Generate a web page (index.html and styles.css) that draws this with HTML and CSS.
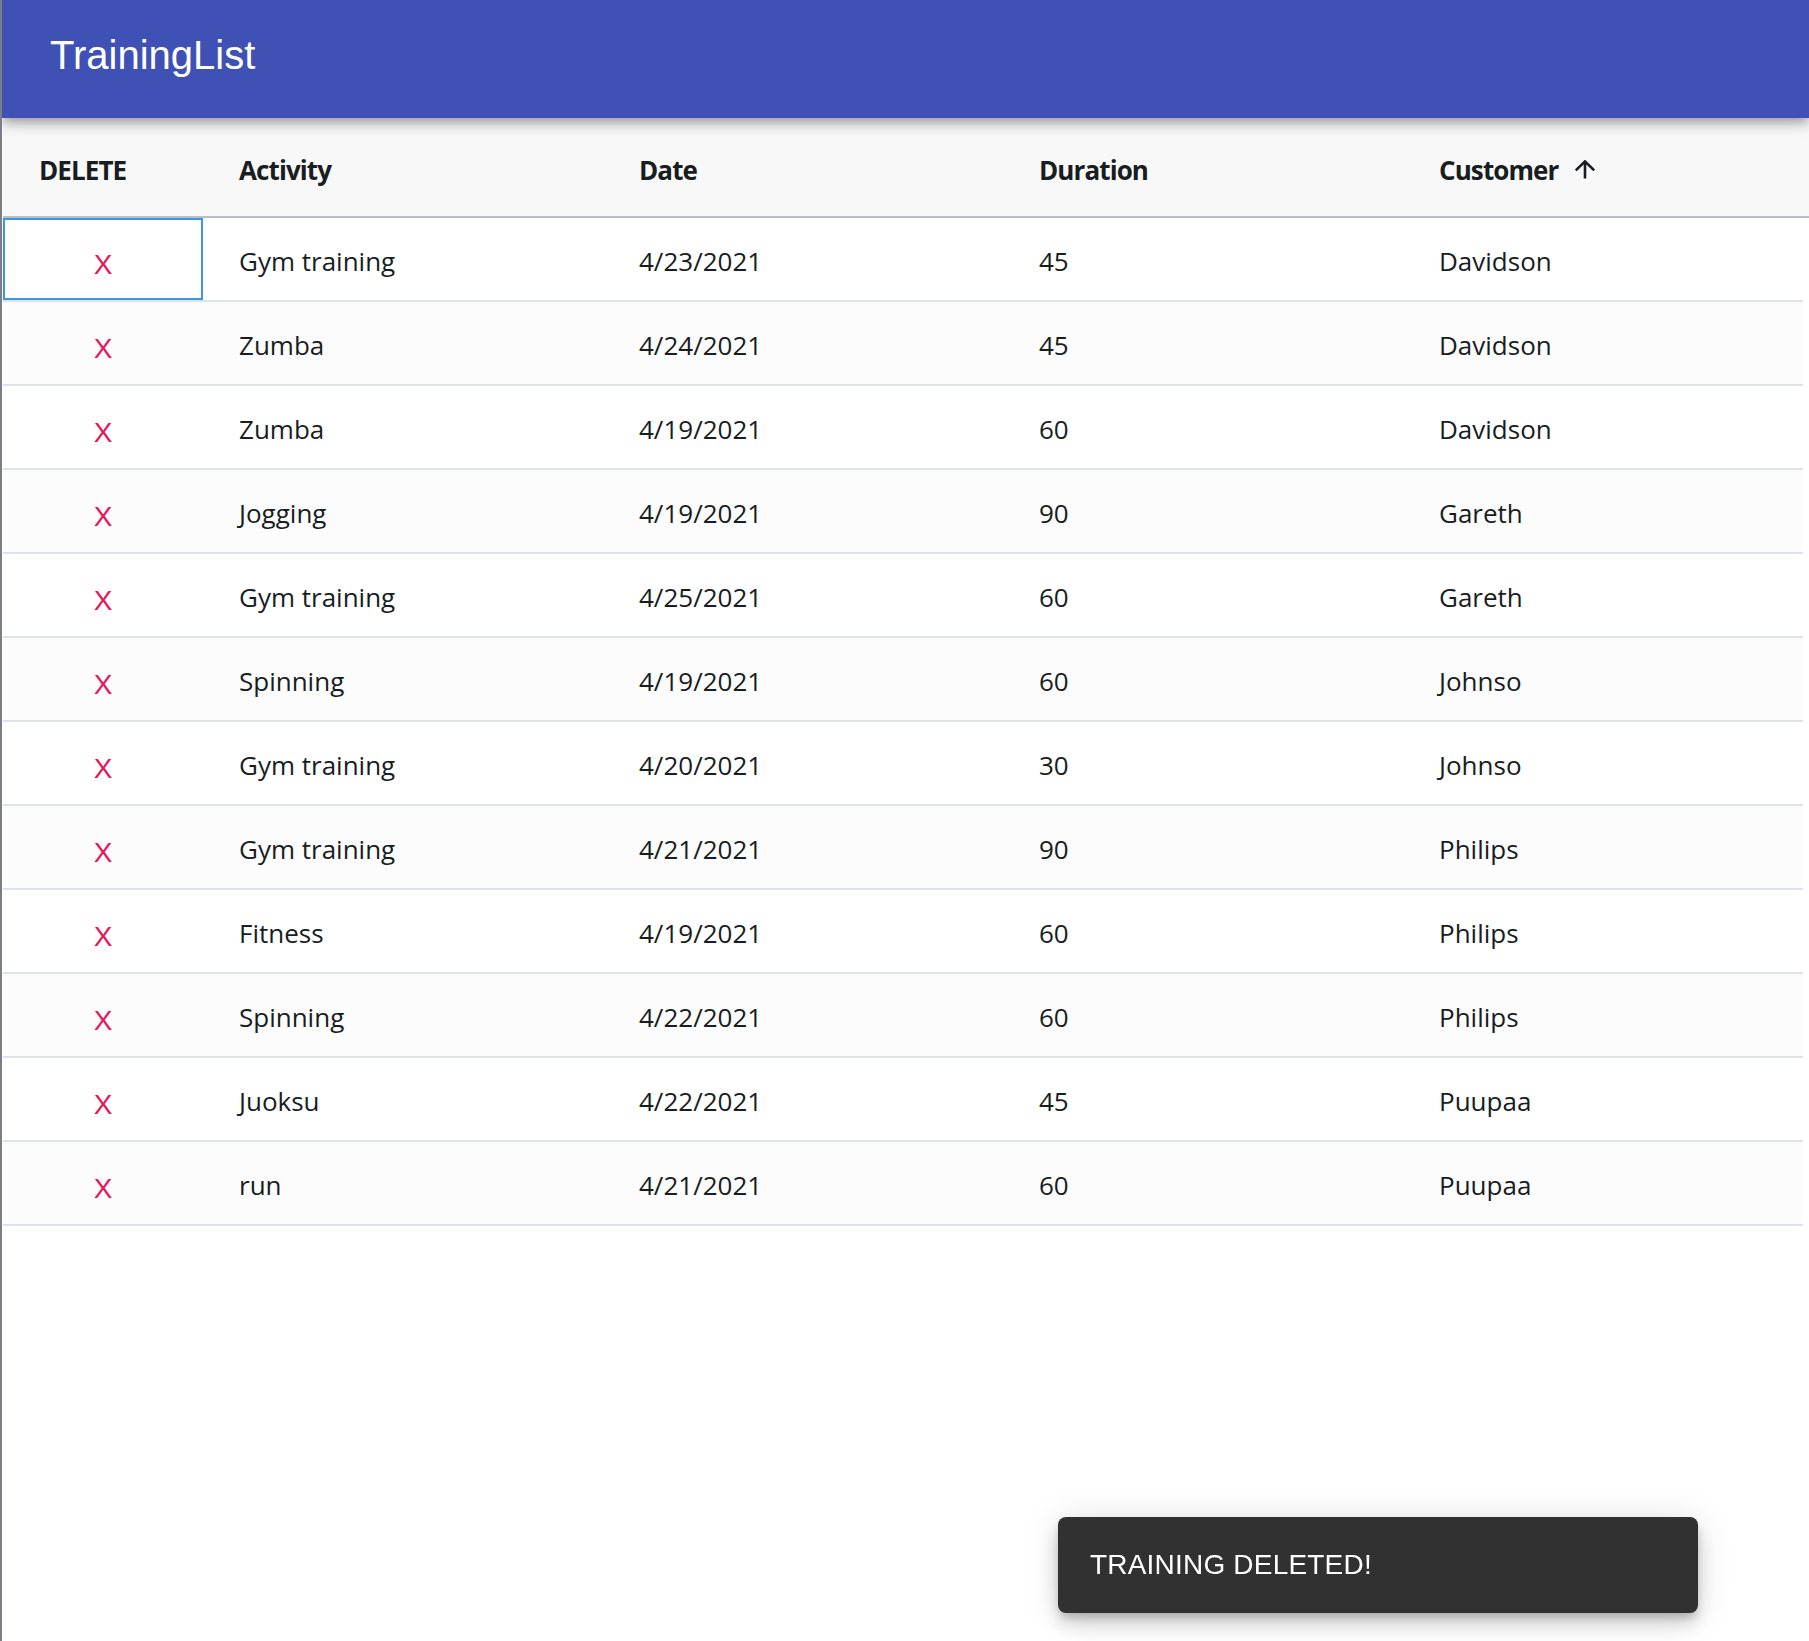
FILE: index.html
```html
<!DOCTYPE html>
<html lang="en">
<head>
<meta charset="utf-8">
<title>TrainingList</title>
<link rel="stylesheet" href="styles.css">
</head>
<body>
<header class="appbar">
  <h1 class="appbar-title">TrainingList</h1>
</header>
<main class="grid">
  <div class="grid-header">
    <div class="hcell">DELETE</div>
    <div class="hcell">Activity</div>
    <div class="hcell">Date</div>
    <div class="hcell">Duration</div>
    <div class="hcell">Customer
      <svg class="sort-icon" width="24" height="19" viewBox="0 0 24 19" aria-hidden="true"><path d="M12 18.5V1.8M2.8 10.4L12 1.4L21.2 10.4" fill="none" stroke="#181d1f" stroke-width="2.6"/></svg>
    </div>
  </div>
  <div class="grid-body">
    <div class="row"><div class="cell del focused"><span class="x">X</span></div><div class="cell">Gym training</div><div class="cell">4/23/2021</div><div class="cell">45</div><div class="cell">Davidson</div></div>
    <div class="row odd"><div class="cell del"><span class="x">X</span></div><div class="cell">Zumba</div><div class="cell">4/24/2021</div><div class="cell">45</div><div class="cell">Davidson</div></div>
    <div class="row"><div class="cell del"><span class="x">X</span></div><div class="cell">Zumba</div><div class="cell">4/19/2021</div><div class="cell">60</div><div class="cell">Davidson</div></div>
    <div class="row odd"><div class="cell del"><span class="x">X</span></div><div class="cell">Jogging</div><div class="cell">4/19/2021</div><div class="cell">90</div><div class="cell">Gareth</div></div>
    <div class="row"><div class="cell del"><span class="x">X</span></div><div class="cell">Gym training</div><div class="cell">4/25/2021</div><div class="cell">60</div><div class="cell">Gareth</div></div>
    <div class="row odd"><div class="cell del"><span class="x">X</span></div><div class="cell">Spinning</div><div class="cell">4/19/2021</div><div class="cell">60</div><div class="cell">Johnso</div></div>
    <div class="row"><div class="cell del"><span class="x">X</span></div><div class="cell">Gym training</div><div class="cell">4/20/2021</div><div class="cell">30</div><div class="cell">Johnso</div></div>
    <div class="row odd"><div class="cell del"><span class="x">X</span></div><div class="cell">Gym training</div><div class="cell">4/21/2021</div><div class="cell">90</div><div class="cell">Philips</div></div>
    <div class="row"><div class="cell del"><span class="x">X</span></div><div class="cell">Fitness</div><div class="cell">4/19/2021</div><div class="cell">60</div><div class="cell">Philips</div></div>
    <div class="row odd"><div class="cell del"><span class="x">X</span></div><div class="cell">Spinning</div><div class="cell">4/22/2021</div><div class="cell">60</div><div class="cell">Philips</div></div>
    <div class="row"><div class="cell del"><span class="x">X</span></div><div class="cell">Juoksu</div><div class="cell">4/22/2021</div><div class="cell">45</div><div class="cell">Puupaa</div></div>
    <div class="row odd"><div class="cell del"><span class="x">X</span></div><div class="cell">run</div><div class="cell">4/21/2021</div><div class="cell">60</div><div class="cell">Puupaa</div></div>
  </div>
</main>
<div class="snackbar">TRAINING DELETED!</div>
</body>
</html>
```

FILE: styles.css
```css
html, body {
  margin: 0;
  padding: 0;
  background: #ffffff;
}
body {
  min-height: 1641px;
  border-left: 2px solid #7c7d88;
  box-sizing: border-box;
  font-family: "Open Sans", "Noto Sans", sans-serif;
  color: #181d1f;
}
.appbar {
  position: relative;
  z-index: 2;
  height: 118px;
  background: #3f51b5;
  display: flex;
  align-items: center;
  padding: 0 0 8px 48px;
  box-sizing: border-box;
  box-shadow: 0 4px 8px -2px rgba(0,0,0,0.2), 0 8px 10px 0 rgba(0,0,0,0.14), 0 2px 20px 0 rgba(0,0,0,0.12);
}
.appbar-title {
  margin: 0;
  font-family: "Liberation Sans", Arial, sans-serif;
  font-weight: 400;
  font-size: 40px;
  line-height: 40px;
  color: #ffffff;
}
.grid {
  position: relative;
  z-index: 1;
  margin-left: 1px;
}
.grid-header {
  display: grid;
  grid-template-columns: 200px repeat(4, 400px);
  height: 98px;
  background: #f8f8f8;
  border-bottom: 2px solid #babfc7;
}
.hcell {
  display: flex;
  align-items: flex-start;
  padding: 7px 0 0 36px;
  height: 91px;
  line-height: 90px;
  font-size: 26px;
  font-weight: 700;
  letter-spacing: -0.9px;
  color: #181d1f;
  white-space: nowrap;
}
.sort-icon {
  margin: 35px 0 0 15px;
}
.grid-body {
  width: 1800px;
}
.row {
  display: grid;
  grid-template-columns: 200px repeat(4, 400px);
  height: 82px;
  border-bottom: 2px solid #dde2eb;
  background: #ffffff;
}
.row.odd {
  background: #fcfcfc;
}
.cell {
  padding: 4px 0 0 36px;
  height: 78px;
  line-height: 78px;
  font-size: 26px;
  white-space: nowrap;
}
.cell.del {
  padding: 7px 0 0 0;
  height: 75px;
  line-height: 78px;
  text-align: center;
  box-sizing: content-box;
}
.cell.focused {
  box-shadow: inset 0 0 0 2px #3b97dd;
}
.x {
  font-family: "Liberation Sans", Arial, sans-serif;
  font-size: 28px;
  color: #e8175d;
}
.snackbar {
  position: fixed;
  left: 1058px;
  top: 1517px;
  width: 640px;
  height: 96px;
  box-sizing: border-box;
  padding-left: 32px;
  display: flex;
  align-items: center;
  background: #313131;
  color: #ffffff;
  border-radius: 8px;
  font-family: "Liberation Sans", Arial, sans-serif;
  font-size: 28px;
  letter-spacing: 0.2px;
  box-shadow: 0 6px 10px -2px rgba(0,0,0,0.2), 0 12px 20px 0 rgba(0,0,0,0.14), 0 2px 36px 0 rgba(0,0,0,0.12);
}
```
